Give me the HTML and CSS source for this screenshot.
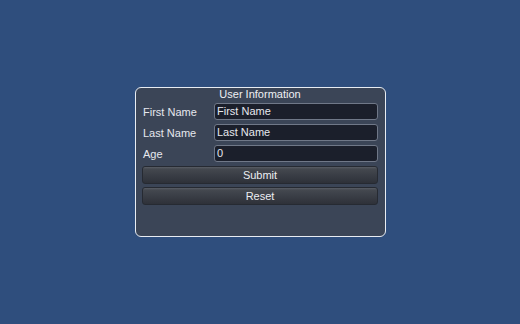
FILE: index.html
```html
<!DOCTYPE html>
<html>
<head>
<meta charset="utf-8">
<link rel="stylesheet" href="styles.css">
</head>
<body>
<div class="stage">
  <div class="panel">
    <div class="title">User Information</div>
    <div class="row">
      <div class="label">First Name</div>
      <div class="field">First Name</div>
    </div>
    <div class="row">
      <div class="label">Last Name</div>
      <div class="field">Last Name</div>
    </div>
    <div class="row">
      <div class="label">Age</div>
      <div class="field">0</div>
    </div>
    <div class="btn">Submit</div>
    <div class="btn">Reset</div>
  </div>
</div>
</body>
</html>
```
FILE: styles.css
```css
html, body {
  margin: 0;
  padding: 0;
  width: 520px;
  height: 324px;
  background: #2f4e7d;
  font-family: "Liberation Sans", Arial, sans-serif;
  overflow: hidden;
}
.stage {
  width: 520px;
  height: 324px;
  display: flex;
  align-items: flex-start;
  padding-top: 87px;
  padding-left: 135px;
  box-sizing: border-box;
}
.panel {
  width: 251px;
  height: 150px;
  box-sizing: border-box;
  border: 1.5px solid #e8ecf2;
  border-radius: 6px;
  background: #3b4557;
  padding: 0 7px 0 6px;
  display: flex;
  flex-direction: column;
}
.title {
  color: #eef0f4;
  font-size: 11px;
  text-align: center;
  height: 13px;
  line-height: 13px;
}
.row {
  display: flex;
  align-items: center;
  height: 17px;
  margin-top: 2px;
  margin-bottom: 2px;
}
.label {
  width: 71px;
  color: #e6e8ee;
  font-size: 11px;
  padding-left: 1px;
}
.field {
  flex: 1;
  height: 17px;
  box-sizing: border-box;
  border: 1px solid #707888;
  border-radius: 3px;
  background: #1b1f2b;
  color: #e6e8ee;
  font-size: 11px;
  line-height: 15px;
  padding-left: 2px;
}
.btn {
  height: 18px;
  box-sizing: border-box;
  margin-top: 2px;
  margin-bottom: 1px;
  border: 1px solid #262a32;
  border-radius: 3px;
  background: linear-gradient(#5a5e66 0, #44484f 2px, #3a3e46 50%, #2e3139 100%);
  color: #eceef2;
  font-size: 11px;
  text-align: center;
  line-height: 16px;
}
```
